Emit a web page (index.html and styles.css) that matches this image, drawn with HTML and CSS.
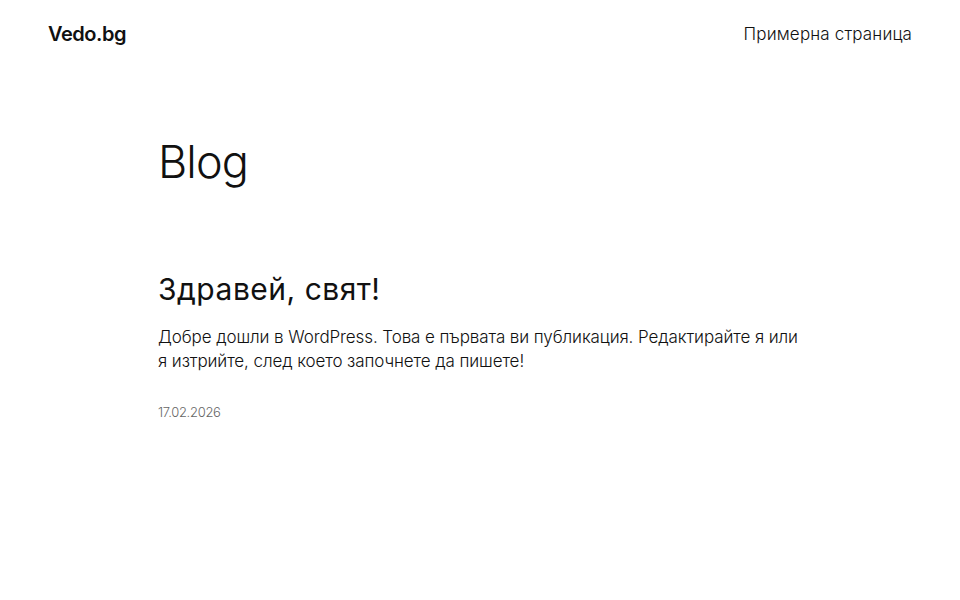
FILE: index.html
```html
<!DOCTYPE html>
<html lang="bg">
<head>
<meta charset="utf-8">
<title>Blog – Vedo.bg</title>
<link rel="stylesheet" href="styles.css">
</head>
<body>
<header class="site-header">
  <a class="site-title" href="#">Vedo.bg</a>
  <nav class="site-nav"><a href="#">Примерна страница</a></nav>
</header>
<main class="content">
  <h1 class="page-title">Blog</h1>
  <article class="post">
    <h2 class="post-title"><a href="#">Здравей, свят!</a></h2>
    <p class="post-excerpt">Добре дошли в WordPress. Това е първата ви публикация. Редактирайте я или я изтрийте, след което започнете да пишете!</p>
    <time class="post-date">17.02.2026</time>
  </article>
</main>
</body>
</html>
```
FILE: styles.css
```css
* { box-sizing: border-box; }
html, body { margin: 0; padding: 0; background: #fff; }
body {
  font-family: Inter, "Noto Sans", sans-serif;
  color: #111;
  -webkit-font-smoothing: antialiased;
}
a { color: inherit; text-decoration: none; }
.site-header {
  display: flex;
  justify-content: space-between;
  align-items: center;
  padding: 20px 48px 0 48px;
  height: 48px;
}
.site-title {
  font-size: 20px;
  font-weight: 600;
  letter-spacing: -0.45px;
}
.site-nav a {
  font-size: 17px;
  font-weight: 300;
  letter-spacing: 0.15px;
}
.content {
  width: 644px;
  margin: 0 auto;
  padding-top: 87px;
}
.page-title {
  margin: 0;
  font-size: 45px;
  font-weight: 300;
  line-height: 54px;
  letter-spacing: -0.9px;
}
.post { margin-top: 82px; }
.post-title {
  margin: 0;
  font-size: 30px;
  font-weight: 400;
  line-height: 36px;
  letter-spacing: 0.5px;
}
.post-excerpt {
  margin: 18px 0 0;
  font-size: 17px;
  font-weight: 300;
  line-height: 24px;
  letter-spacing: -0.1px;
}
.post-date {
  display: block;
  margin-top: 31px;
  font-size: 13px;
  font-weight: 300;
  color: #666;
  letter-spacing: -0.3px;
}
```
